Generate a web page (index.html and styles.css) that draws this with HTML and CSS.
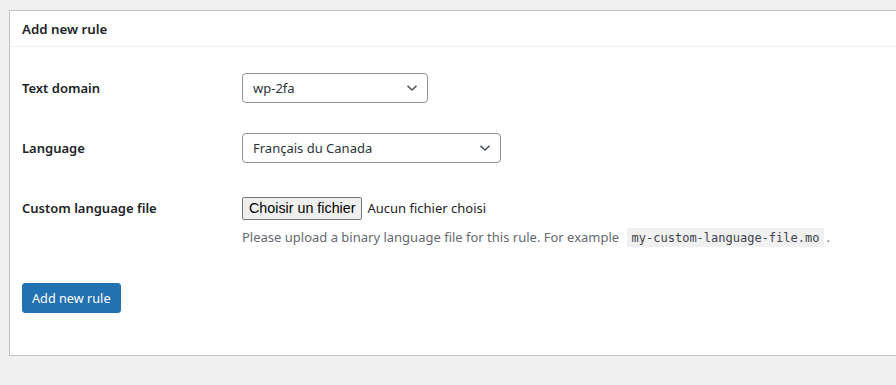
FILE: index.html
```html
<!DOCTYPE html>
<html lang="fr">
<head>
<meta charset="utf-8">
<title>Add new rule</title>
<link rel="stylesheet" href="styles.css">
</head>
<body>
<div class="card">
  <div class="card-header">
    <h2 class="card-title">Add new rule</h2>
  </div>
  <div class="card-body">
    <div class="form-row">
      <div class="form-label">Text domain</div>
      <div class="form-field">
        <div class="select select-domain">
          <span class="select-value">wp-2fa</span>
          <svg class="chevron" width="12" height="8" viewBox="0 0 12 8"><path d="M1.5 1.8 L6 6 L10.5 1.8" fill="none" stroke="#50575e" stroke-width="1.6"/></svg>
        </div>
      </div>
    </div>
    <div class="form-row">
      <div class="form-label">Language</div>
      <div class="form-field">
        <div class="select select-language">
          <span class="select-value">Français du Canada</span>
          <svg class="chevron" width="12" height="8" viewBox="0 0 12 8"><path d="M1.5 1.8 L6 6 L10.5 1.8" fill="none" stroke="#50575e" stroke-width="1.6"/></svg>
        </div>
      </div>
    </div>
    <div class="form-row">
      <div class="form-label">Custom language file</div>
      <div class="form-field">
        <div class="file-input">
          <span class="file-button">Choisir un fichier</span>
          <span class="file-name">Aucun fichier choisi</span>
        </div>
        <p class="description">Please upload a binary language file for this rule. For example <code class="code">my-custom-language-file.mo</code>.</p>
      </div>
    </div>
    <div class="submit">
      <button class="button-primary" type="button">Add new rule</button>
    </div>
  </div>
</div>
</body>
</html>
```
FILE: styles.css
```css
html, body {
  margin: 0;
  padding: 0;
  background: #f0f0f1;
}
body {
  padding: 10px 0 0 9px;
  font-family: "Noto Sans", "Open Sans", sans-serif;
  color: #1d2327;
}
.card {
  background: #fff;
  border: 1px solid #c3c4c7;
  border-right: none;
  box-sizing: border-box;
  height: 346px;
}
.card-header {
  height: 35px;
  display: flex;
  align-items: center;
  padding: 0 12px;
  border-bottom: 1px solid #f0f0f1;
}
.card-title {
  margin: 0;
  font-size: 13.3px;
  font-weight: 600;
  color: #1d2327;
}
.card-body {
  padding: 11px 12px 0;
}
.form-row {
  display: grid;
  grid-template-columns: 220px 1fr;
  padding: 15px 0;
}
.form-label {
  font-size: 13px;
  font-weight: 600;
  line-height: 30px;
  color: #1d2327;
}
.form-field {
  display: flex;
  flex-direction: column;
  align-items: flex-start;
}
.select {
  height: 30px;
  box-sizing: border-box;
  border: 1px solid #8c8f94;
  border-radius: 4px;
  display: flex;
  align-items: center;
  justify-content: space-between;
  padding: 0 9px 0 10px;
  font-size: 13px;
  color: #2c3338;
  background: #fff;
}
.select-domain { width: 186px; }
.select-language { width: 259px; }
.chevron { display: block; }
.file-input {
  height: 30px;
  display: flex;
  align-items: center;
  gap: 5px;
}
.file-button {
  box-sizing: border-box;
  height: 23px;
  display: flex;
  align-items: center;
  padding: 0 6px;
  background: #efefef;
  border: 1px solid #767676;
  border-radius: 2px;
  color: #000;
  font-family: "Liberation Sans", Arial, sans-serif;
  font-size: 14.3px;
}
.file-name {
  color: #1d2327;
  font-size: 13px;
}
.description {
  margin: 4px 0 0;
  font-size: 13px;
  line-height: 20px;
  color: #646970;
}
.code {
  font-family: "DejaVu Sans Mono", "Liberation Mono", monospace;
  font-size: 12px;
  background: #f0f0f1;
  color: #3c434a;
  padding: 3px 5px 2px;
  margin: 0 2px 0 4px;
}
.submit {
  padding-top: 20px;
}
.button-primary {
  height: 30px;
  padding: 0 9px;
  background: #2271b1;
  border: 1px solid #2271b1;
  border-radius: 3px;
  color: #fff;
  font-family: "Noto Sans", "Open Sans", sans-serif;
  font-size: 12.7px;
  cursor: pointer;
}
```
